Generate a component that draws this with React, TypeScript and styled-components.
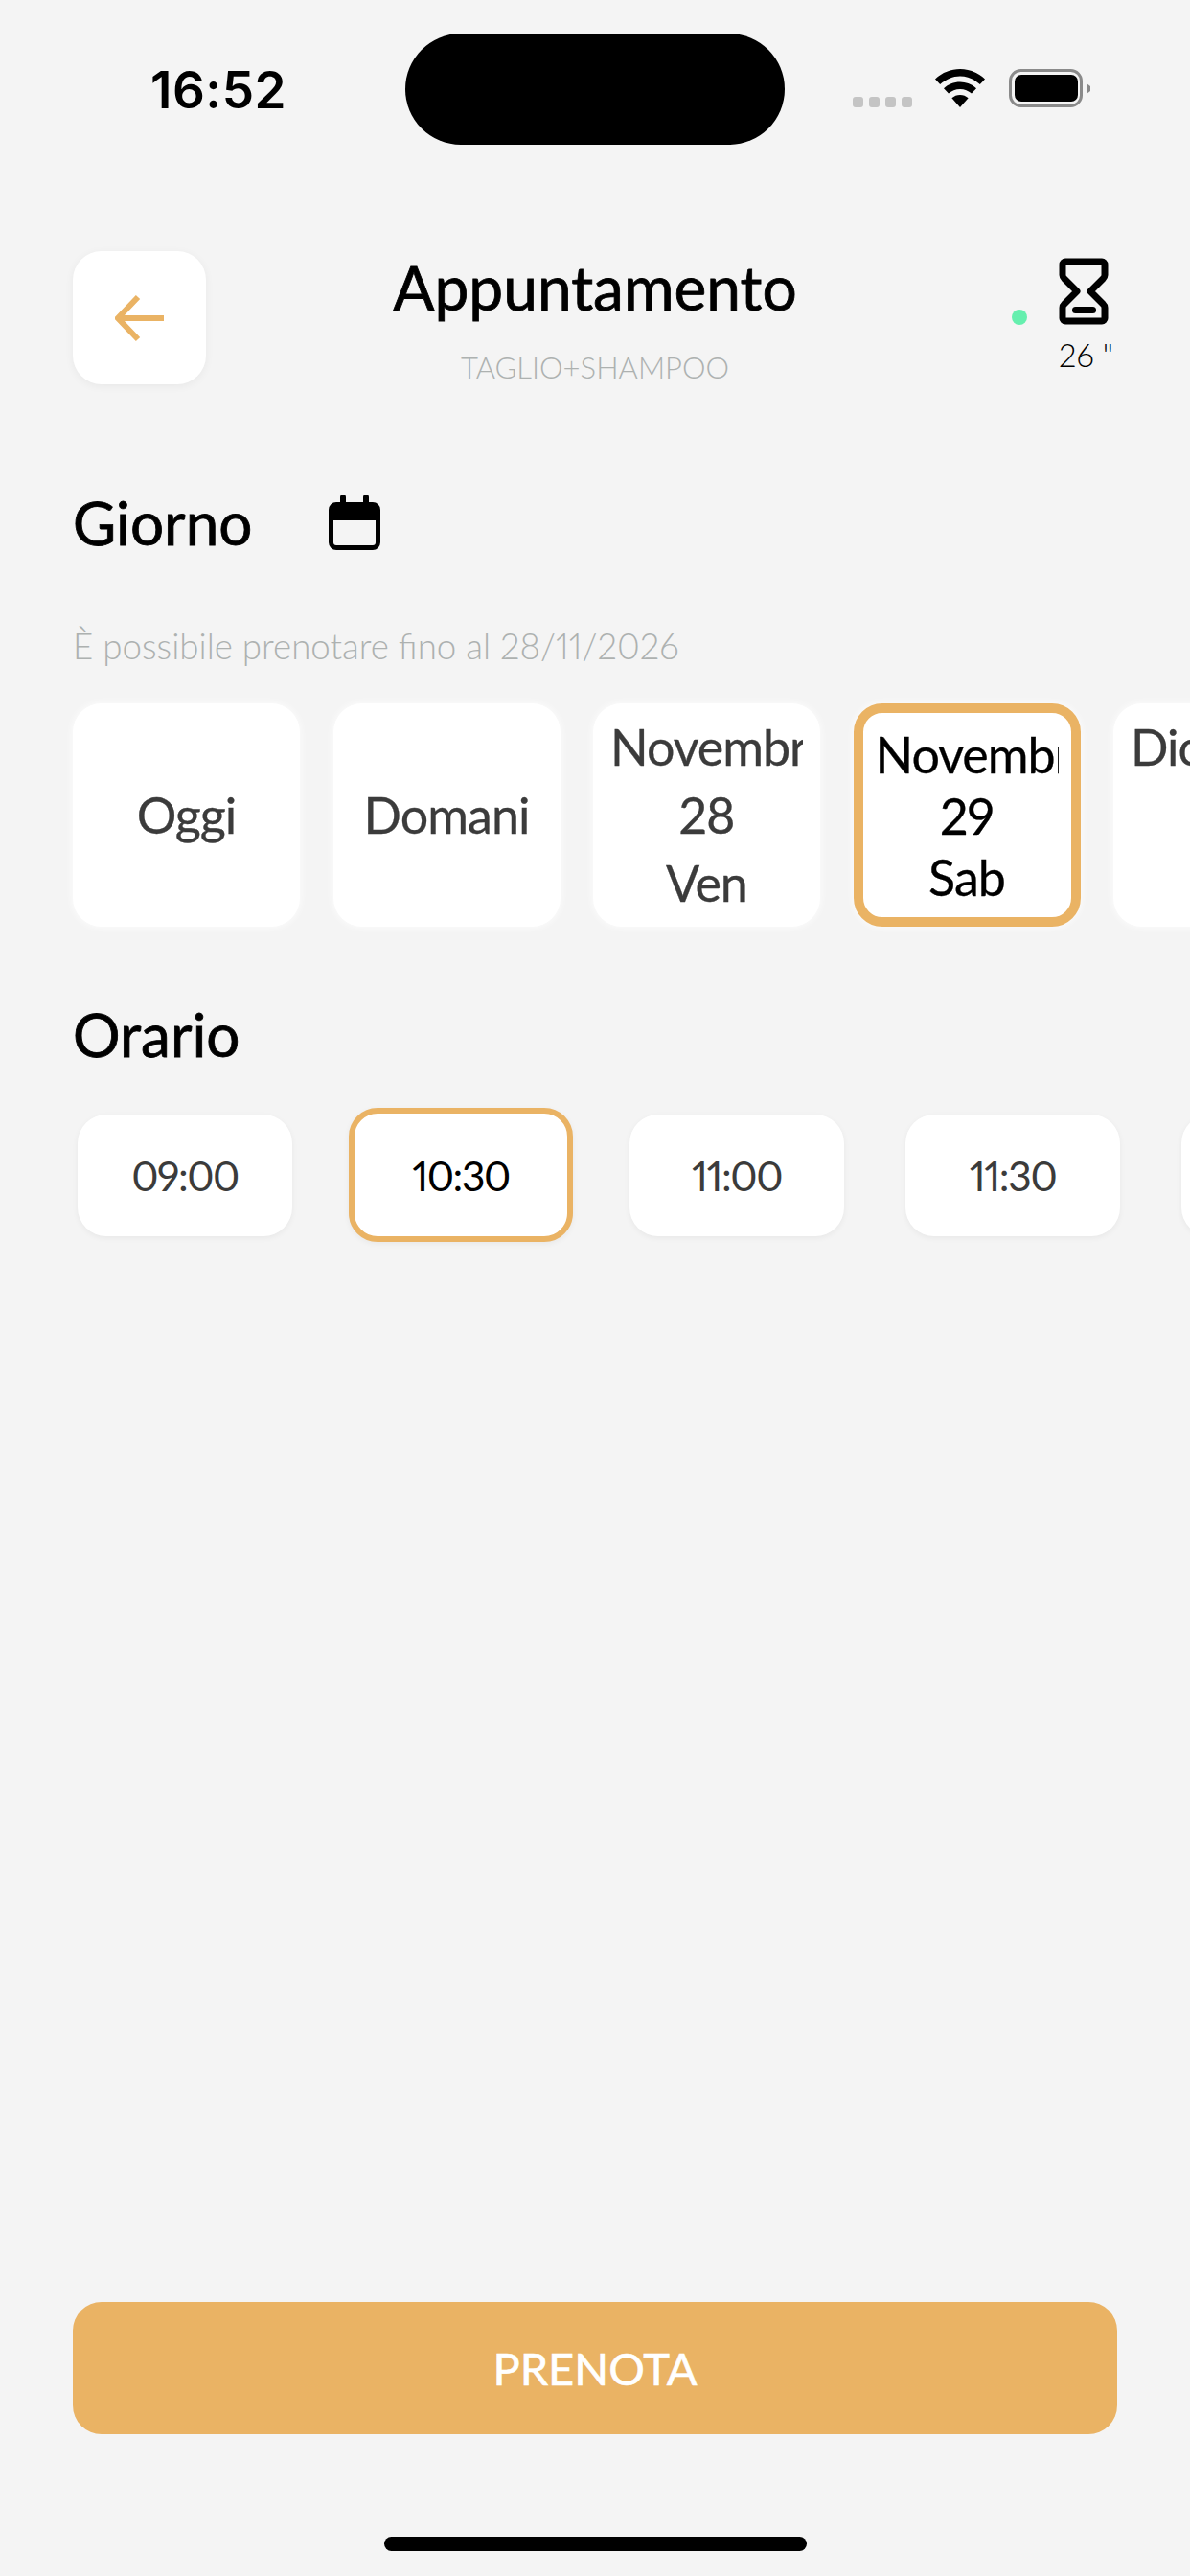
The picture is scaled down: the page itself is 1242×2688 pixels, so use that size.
import React from "react";
import styled, { createGlobalStyle } from "styled-components";

const ACCENT = "#EAB364";
const FONT = `"Lato", "Noto Sans", sans-serif`;

const GlobalStyle = createGlobalStyle`
  html, body {
    margin: 0;
    padding: 0;
    background: #f4f4f4;
  }
  * {
    box-sizing: border-box;
  }
`;

const Screen = styled.div`
  width: 1242px;
  height: 2688px;
  background: #f4f4f4;
  display: flex;
  flex-direction: column;
  overflow: hidden;
  font-family: ${FONT};
  font-variant-numeric: proportional-nums;
`;

const StatusBar = styled.div`
  display: grid;
  grid-template-columns: 266px 396px 1fr;
  height: 116px;
  margin-top: 35px;
  padding: 0 103px 0 157px;
  flex: none;
`;

const Time = styled.div`
  font-family: "Inter", sans-serif;
  font-weight: 600;
  font-size: 53px;
  line-height: 58px;
  letter-spacing: 0.5px;
  color: #000;
  margin-top: 30px;
`;

const Island = styled.div`
  background: #000;
  border-radius: 58px;
  height: 116px;
`;

const StatusIcons = styled.div`
  display: flex;
  align-items: flex-end;
  justify-content: flex-end;
  padding-bottom: 39px;
`;

const SignalDots = styled.div`
  display: flex;
  gap: 6px;
  margin-right: 24px;
`;

const SignalDot = styled.span`
  width: 11px;
  height: 11px;
  border-radius: 3px;
  background: #c4c4c4;
`;

const Header = styled.div`
  display: grid;
  grid-template-columns: 1fr auto 1fr;
  margin-top: 111px;
  padding: 0 76px;
  flex: none;
`;

const BackButton = styled.div`
  width: 139px;
  height: 139px;
  background: #fff;
  border-radius: 30px;
  box-shadow: 0 2px 10px rgba(0, 0, 0, 0.05);
  display: flex;
  align-items: center;
  justify-content: center;
`;

const TitleBlock = styled.div`
  display: flex;
  flex-direction: column;
  align-items: center;
`;

const Title = styled.div`
  font-size: 64px;
  line-height: 76px;
  font-weight: 400;
  color: #000;
  -webkit-text-stroke: 0.8px #000;
`;

const Subtitle = styled.div`
  font-size: 31px;
  line-height: 36px;
  font-weight: 300;
  color: #adb1b0;
  margin-top: 27px;
`;

const TimerGroup = styled.div`
  display: flex;
  justify-content: flex-end;
  align-items: flex-start;
  padding-top: 7px;
`;

const StatusDot = styled.span`
  width: 16px;
  height: 16px;
  border-radius: 50%;
  background: #65efae;
  margin-top: 54px;
  margin-right: 33px;
`;

const TimerColumn = styled.div`
  display: flex;
  flex-direction: column;
  align-items: flex-start;
  margin-right: 4px;
`;

const TimerText = styled.div`
  font-size: 33px;
  line-height: 40px;
  font-weight: 300;
  color: #000;
  margin-top: 11px;
  white-space: pre;
`;

const SectionHead = styled.div<{ $top: number }>`
  display: flex;
  align-items: center;
  margin-top: ${({ $top }) => $top}px;
  padding-left: 76px;
  height: 60px;
  flex: none;
`;

const SectionTitle = styled.div`
  font-size: 62px;
  line-height: 60px;
  color: #000;
  -webkit-text-stroke: 0.8px #000;
`;

const CalendarWrap = styled.div`
  display: flex;
  margin-left: 80px;
`;

const Hint = styled.div`
  font-size: 36.7px;
  line-height: 44px;
  font-weight: 300;
  color: #adb1b0;
  margin-top: 77px;
  padding-left: 76px;
  flex: none;
`;

const DayRow = styled.div`
  display: flex;
  gap: 34.5px;
  margin-top: 38px;
  padding-left: 76px;
  flex: none;
`;

const DayCard = styled.div<{ $selected?: boolean }>`
  flex: none;
  width: 237px;
  height: 233px;
  background: #fff;
  border-radius: 30px;
  border: ${({ $selected }) => ($selected ? `10px solid ${ACCENT}` : "none")};
  box-shadow: 0 0 8px rgba(255, 255, 255, 0.9);
  color: ${({ $selected }) => ($selected ? "#000" : "#3b3b3b")};
  display: flex;
  flex-direction: column;
  justify-content: center;
  padding: 0 ${({ $selected }) => ($selected ? "13px" : "18px")};
  text-align: center;
  font-size: 52px;
  letter-spacing: -1px;
  line-height: ${({ $selected }) => ($selected ? "64px" : "71px")};
  -webkit-text-stroke: 0.3px currentColor;
`;

const DayLine = styled.div`
  overflow: hidden;
  white-space: nowrap;
`;

const SlotRow = styled.div`
  display: flex;
  align-items: center;
  margin-top: 47px;
  padding-left: 49px;
  height: 140px;
  flex: none;
`;

const SlotCell = styled.div`
  flex: none;
  width: 288px;
  display: flex;
  justify-content: center;
`;

const Slot = styled.div<{ $selected?: boolean }>`
  width: ${({ $selected }) => ($selected ? "234px" : "224px")};
  height: ${({ $selected }) => ($selected ? "140px" : "127px")};
  background: #fff;
  border-radius: 30px;
  border: ${({ $selected }) => ($selected ? `6px solid ${ACCENT}` : "none")};
  box-shadow: 0 2px 6px rgba(0, 0, 0, 0.05);
  color: ${({ $selected }) => ($selected ? "#000" : "#3b3b3b")};
  display: flex;
  align-items: center;
  justify-content: center;
  font-size: 43px;
  letter-spacing: -1.5px;
`;

const Spacer = styled.div`
  flex: 1;
`;

const PrimaryButton = styled.div`
  margin: 0 76px;
  height: 138px;
  flex: none;
  background: ${ACCENT};
  border-radius: 30px;
  display: flex;
  align-items: center;
  justify-content: center;
  color: #fff;
  font-size: 47px;
  -webkit-text-stroke: 0.6px #fff;
`;

const HomeIndicator = styled.div`
  width: 441px;
  height: 15px;
  border-radius: 8px;
  background: #000;
  margin: 107px auto 26px;
  flex: none;
`;

const WifiIcon = () => (
  <svg width="52" height="40" viewBox="0 0 52 40" style={{ marginRight: 25 }}>
    <path d="M26 0C16.5 0 7.5 3.6 0 10.4l5.2 5.6C11.5 10.4 18.5 7.4 26 7.4s14.5 3 20.8 8.6l5.2-5.6C44.5 3.6 35.5 0 26 0z" fill="#000" />
    <path d="M26 13.5c-6.4 0-12.4 2.4-17 6.7l5 5.4c3.2-3 7.4-4.7 12-4.7s8.8 1.7 12 4.7l5-5.4c-4.6-4.3-10.6-6.7-17-6.7z" fill="#000" />
    <path d="M26 27c-3.2 0-6.2 1.2-8.6 3.3L26 40l8.6-9.7C32.2 28.2 29.2 27 26 27z" fill="#000" />
  </svg>
);

const BatteryIcon = () => (
  <svg width="86" height="40" viewBox="0 0 86 40">
    <rect x="1.5" y="1.5" width="74" height="37" rx="11" fill="none" stroke="#8a8a8a" strokeWidth="3" />
    <rect x="6" y="6" width="66" height="28" rx="7" fill="#000" />
    <path d="M81 15l4 3v5l-4 3z" fill="#8a8a8a" />
  </svg>
);

const ArrowIcon = () => (
  <svg width="52" height="50" viewBox="0 0 52 50" fill="none">
    <path d="M51 25H5M24 3L3 25l21 22" stroke={ACCENT} strokeWidth="6" />
  </svg>
);

const HourglassIcon = () => (
  <svg width="52" height="70" viewBox="0 0 52 70" fill="none">
    <path
      d="M7 4h38a3 3 0 0 1 3 3v11c0 2-1 3-2 4L33 35l13 13c1 1 2 2 2 4v11a3 3 0 0 1-3 3H7a3 3 0 0 1-3-3V52c0-2 1-3 2-4l13-13L6 22c-1-1-2-2-2-4V7a3 3 0 0 1 3-3z"
      stroke="#000"
      strokeWidth="7"
      strokeLinejoin="round"
    />
    <rect x="14" y="51" width="25" height="7" rx="3.5" fill="#000" />
  </svg>
);

const CalendarIcon = () => (
  <svg width="54" height="58" viewBox="0 0 54 58" fill="none">
    <path d="M15 0a3 3 0 0 1 3 3v5h18V3a3 3 0 0 1 6 0v5h4a8 8 0 0 1 8 8v34a8 8 0 0 1-8 8H8a8 8 0 0 1-8-8V16a8 8 0 0 1 8-8h4V3a3 3 0 0 1 3-3z" fill="#000" />
    <path d="M5 27h44v23a3 3 0 0 1-3 3H8a3 3 0 0 1-3-3z" fill="#f4f4f4" />
  </svg>
);

const App: React.FC = () => {
  const days = [
    { lines: ["Oggi"] },
    { lines: ["Domani"] },
    { lines: ["Novembre", "28", "Ven"] },
    { lines: ["Novembre", "29", "Sab"], selected: true },
    { lines: ["Dicembre", "1", "Lun"] },
  ];
  const slots = [
    { time: "09:00" },
    { time: "10:30", selected: true },
    { time: "11:00" },
    { time: "11:30" },
    { time: "12:00" },
  ];

  return (
    <Screen>
      <GlobalStyle />
      <StatusBar>
        <Time>16:52</Time>
        <Island />
        <StatusIcons>
          <SignalDots>
            <SignalDot />
            <SignalDot />
            <SignalDot />
            <SignalDot />
          </SignalDots>
          <WifiIcon />
          <BatteryIcon />
        </StatusIcons>
      </StatusBar>

      <Header>
        <BackButton>
          <ArrowIcon />
        </BackButton>
        <TitleBlock>
          <Title>Appuntamento</Title>
          <Subtitle>TAGLIO+SHAMPOO</Subtitle>
        </TitleBlock>
        <TimerGroup>
          <StatusDot />
          <TimerColumn>
            <HourglassIcon />
            <TimerText>26 "</TimerText>
          </TimerColumn>
        </TimerGroup>
      </Header>

      <SectionHead $top={114}>
        <SectionTitle>Giorno</SectionTitle>
        <CalendarWrap>
          <CalendarIcon />
        </CalendarWrap>
      </SectionHead>
      <Hint>È possibile prenotare fino al 28/11/2026</Hint>
      <DayRow>
        {days.map((day) => (
          <DayCard key={day.lines.join("-")} $selected={day.selected}>
            {day.lines.map((line) => (
              <DayLine key={line}>{line}</DayLine>
            ))}
          </DayCard>
        ))}
      </DayRow>

      <SectionHead $top={82}>
        <SectionTitle>Orario</SectionTitle>
      </SectionHead>
      <SlotRow>
        {slots.map((slot) => (
          <SlotCell key={slot.time}>
            <Slot $selected={slot.selected}>{slot.time}</Slot>
          </SlotCell>
        ))}
      </SlotRow>

      <Spacer />
      <PrimaryButton>PRENOTA</PrimaryButton>
      <HomeIndicator />
    </Screen>
  );
};

export default App;
